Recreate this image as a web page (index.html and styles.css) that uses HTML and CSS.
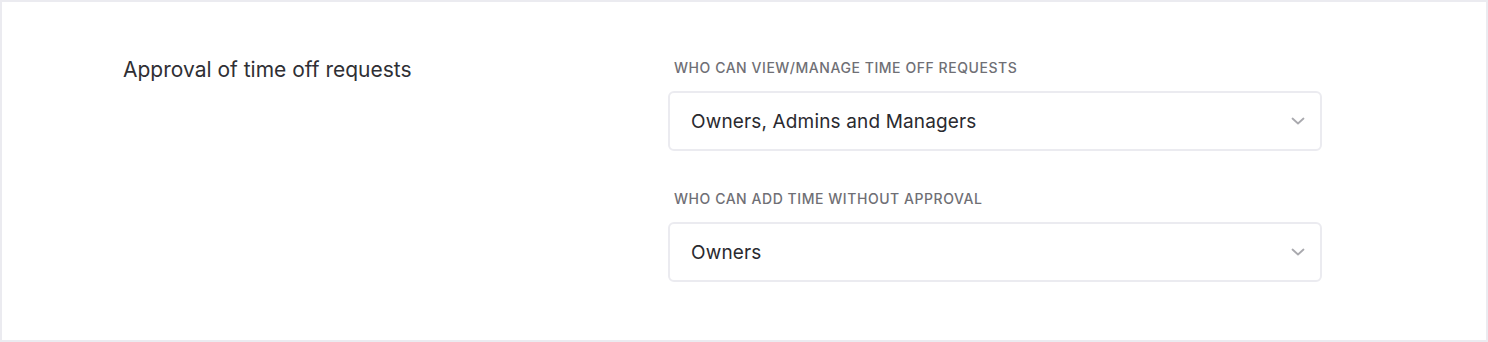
FILE: index.html
```html
<!DOCTYPE html>
<html lang="en">
<head>
<meta charset="utf-8">
<title>Approval settings</title>
<link rel="stylesheet" href="styles.css">
</head>
<body>
<div class="frame">
  <section class="setting">
    <h2 class="setting-title">Approval of time off requests</h2>
    <div class="fields">
      <div class="field">
        <div class="field-label">Who can view/manage time off requests</div>
        <div class="select">
          <span class="select-value">Owners, Admins and Managers</span>
          <svg class="chevron" width="14" height="8" viewBox="0 0 14 8"><path d="M1.5 1.5l5.5 5 5.5-5" fill="none" stroke="#a9a9ae" stroke-width="1.8" stroke-linecap="round" stroke-linejoin="round"/></svg>
        </div>
      </div>
      <div class="field">
        <div class="field-label">Who can add time without approval</div>
        <div class="select">
          <span class="select-value">Owners</span>
          <svg class="chevron" width="14" height="8" viewBox="0 0 14 8"><path d="M1.5 1.5l5.5 5 5.5-5" fill="none" stroke="#a9a9ae" stroke-width="1.8" stroke-linecap="round" stroke-linejoin="round"/></svg>
        </div>
      </div>
    </div>
  </section>
</div>
</body>
</html>
```

FILE: styles.css
```css
* { box-sizing: border-box; }
html, body { margin: 0; padding: 0; background: #fff; }
body { font-family: Inter, "Noto Sans", sans-serif; color: #2d2d32; }
.frame {
  width: 1488px;
  height: 342px;
  border: 2px solid #ebebf0;
  background: #fff;
}
.setting {
  display: flex;
  padding: 57px 0 0 121px;
}
.setting-title {
  width: 545px;
  margin: 0;
  font-size: 21px;
  line-height: 22px;
  font-weight: 400;
  color: #2f2f34;
}
.fields {
  width: 654px;
  display: flex;
  flex-direction: column;
  gap: 39px;
}
.field-label {
  padding-left: 6px;
  font-size: 14px;
  line-height: 18px;
  letter-spacing: 0.55px;
  font-weight: 500;
  text-transform: uppercase;
  color: #6f6f75;
  margin-bottom: 14px;
}
.select {
  height: 60px;
  border: 2px solid #ebebf0;
  border-radius: 6px;
  display: flex;
  align-items: center;
  justify-content: space-between;
  padding: 0 15px 0 21px;
}
.select-value {
  font-size: 19px;
  letter-spacing: 0.15px;
  color: #2a2a2f;
}
.chevron { display: block; }
```
